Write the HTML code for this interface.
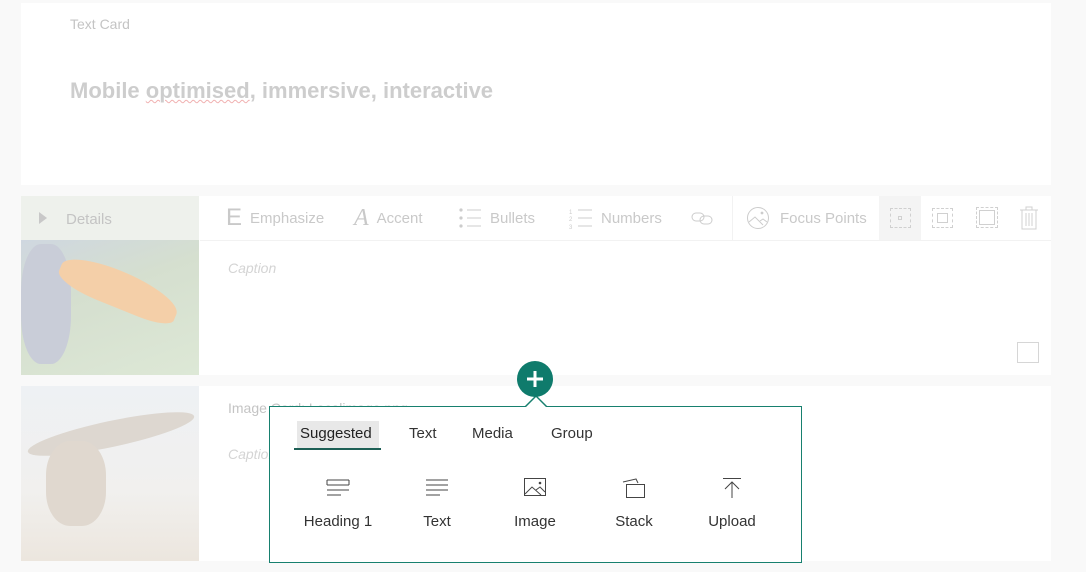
<!DOCTYPE html>
<html><head><meta charset="utf-8"><style>
*{margin:0;padding:0;box-sizing:border-box}
body{width:1086px;height:572px;background:#f9f9f9;font-family:"Liberation Sans",sans-serif;position:relative;overflow:hidden;color:#c8c8c8}
.card{position:absolute;left:21px;width:1030px;background:#fff}
.abs{position:absolute}
.tb{position:absolute;top:0;height:44px;font-size:15px;color:#c9c9c9;display:flex;align-items:center}
.pop{position:absolute;left:269px;top:406px;width:533px;height:157px;border:1.5px solid #17806f;background:#fff}
.tab{position:absolute;top:18px;font-size:15px;color:#333}
.it{position:absolute;top:70px;width:90px;text-align:center;font-size:15px;color:#333}
.it svg{display:block;margin:0 auto 14px}
</style></head><body>
<div class="card" style="top:3px;height:182px">
 <div class="abs" style="left:49px;top:13px;font-size:14px;color:#c4c4c4">Text Card</div>
 <div class="abs" style="left:49px;top:75px;font-size:22px;font-weight:bold;color:#cdcdcd">Mobile <span style="text-decoration:underline wavy #f0b0b0;text-decoration-thickness:1px">optimised</span>, immersive, interactive</div>
</div>
<div class="card" style="top:196px;height:179px">
 <div class="abs" style="left:0;top:0;width:178px;height:44px;background:#eef1ec"></div>
 <div class="abs" style="left:18px;top:16px;width:0;height:0;border-left:8px solid #c8c8c8;border-top:6px solid transparent;border-bottom:6px solid transparent"></div>
 <div class="abs" style="left:45px;top:15px;font-size:15px;color:#c4c4c4">Details</div>
 <div class="abs" style="left:0;top:44px;width:178px;height:135px;background:linear-gradient(160deg,#cfd7e0 0%,#d5dfcf 40%,#dde8d6 100%)"></div>
 <div class="abs" style="left:0;top:48px;width:50px;height:120px;border-radius:40%;background:#c9cdd8"></div>
 <div class="abs" style="left:40px;top:52px;width:125px;height:36px;border-radius:50% 60% 30% 40%;background:#f4cfa8;transform:rotate(22deg);transform-origin:left center"></div>
 <div class="abs" style="left:179px;top:44px;width:851px;height:1px;background:#f2f2f2"></div>
 <div class="tb" style="left:205px"><span style="font-size:24px;margin-right:8px">E</span>Emphasize</div>
 <div class="tb" style="left:333px"><span style="font-size:24px;font-style:italic;margin-right:8px;font-family:'Liberation Serif'">A</span>Accent</div>
 <div class="tb" style="left:437px"><svg width="24" height="22" style="margin-right:8px"><path d="M9 3h14M9 11h14M9 19h14" stroke="#ccc"/><circle cx="3" cy="3" r="1.6" fill="#ccc"/><circle cx="3" cy="11" r="1.6" fill="#ccc"/><circle cx="3" cy="19" r="1.6" fill="#ccc"/></svg>Bullets</div>
 <div class="tb" style="left:548px"><svg width="24" height="22" style="margin-right:8px"><path d="M9 3h14M9 11h14M9 19h14" stroke="#ccc"/><text x="0" y="7" font-size="6" fill="#ccc">1</text><text x="0" y="14" font-size="6" fill="#ccc">2</text><text x="0" y="22" font-size="6" fill="#ccc">3</text></svg>Numbers</div>
 <div class="tb" style="left:670px"><svg width="24" height="16"><rect x="1" y="3" width="12" height="8" rx="4" stroke="#ccc" fill="none"/><rect x="9" y="6" width="12" height="8" rx="4" stroke="#ccc" fill="none"/></svg></div>
 <div class="abs" style="left:711px;top:0;width:1px;height:44px;background:#f2f2f2"></div>
 <div class="tb" style="left:725px"><svg width="24" height="24" style="margin-right:10px"><circle cx="12" cy="12" r="10.5" stroke="#ccc" fill="none"/><path d="M3 16l6-5 8 8M14 15l3-2 4 3" stroke="#ccc" fill="none"/><circle cx="16" cy="7" r="1.4" fill="#ccc"/></svg>Focus Points</div>
 <div class="abs" style="left:858px;top:0;width:42px;height:44px;background:#f4f4f4"></div>
 <div class="abs" style="left:869px;top:12px;width:21px;height:20px;border:1px dashed #d0d0d0"></div>
 <div class="abs" style="left:877px;top:20px;width:4px;height:4px;border:1px solid #d0d0d0"></div>
 <div class="abs" style="left:911px;top:12px;width:21px;height:20px;border:1px dashed #d0d0d0"></div>
 <div class="abs" style="left:916px;top:17px;width:11px;height:10px;border:1px solid #d0d0d0"></div>
 <div class="abs" style="left:955px;top:11px;width:22px;height:21px;border:1px dashed #d0d0d0"></div>
 <div class="abs" style="left:958px;top:14px;width:16px;height:15px;border:1.5px solid #d0d0d0"></div>
 <svg class="abs" style="left:998px;top:10px" width="20" height="24"><path d="M1 4h18M7 4V1h6v3M3 4v19h14V4M7 7v13M10 7v13M13 7v13" stroke="#d0d0d0" fill="none"/></svg>
 <div class="abs" style="left:207px;top:64px;font-size:14px;font-style:italic;color:#d4d4d4">Caption</div>
 <div class="abs" style="left:996px;top:146px;width:22px;height:21px;border:1px solid #d6d6d6"></div>
</div>
<div class="card" style="top:386px;height:175px">
 <div class="abs" style="left:0;top:0;width:178px;height:175px;background:linear-gradient(180deg,#eef1f4 0%,#f1f0ee 60%,#ece6de 100%)"></div>
 <div class="abs" style="left:5px;top:35px;width:170px;height:26px;border-radius:50%;background:#ddd7d0;transform:rotate(-12deg)"></div>
 <div class="abs" style="left:25px;top:55px;width:60px;height:85px;border-radius:40%;background:#e0d8cf"></div>
 <div class="abs" style="left:207px;top:14px;font-size:14px;color:#c4c4c4">Image Card: Localimage.png</div>
 <div class="abs" style="left:207px;top:60px;font-size:14px;font-style:italic;color:#d4d4d4">Caption</div>
</div>
<div class="pop">
 <div class="abs" style="left:27px;top:14px;width:82px;height:27px;background:#e8e8e8"></div>
 <div class="tab" style="left:30px;color:#222">Suggested</div>
 <div class="abs" style="left:24px;top:41px;width:87px;height:2px;background:#1d5f55"></div>
 <div class="tab" style="left:139px">Text</div>
 <div class="tab" style="left:202px">Media</div>
 <div class="tab" style="left:281px">Group</div>
 <div class="it" style="left:23px"><svg width="24" height="22"><path d="M1 3h22M1 8h22M1 3v5M23 3v5M1 13h22M1 18h14" stroke="#444" fill="none"/></svg>Heading 1</div>
 <div class="it" style="left:122px"><svg width="24" height="22"><path d="M1 3h22M1 8h22M1 13h22M1 18h14" stroke="#444" fill="none"/></svg>Text</div>
 <div class="it" style="left:220px"><svg width="24" height="22"><rect x="1.5" y="1.5" width="21" height="17" stroke="#444" fill="none"/><path d="M2 17l7-7 9 8M13 13l4-3 5 5" stroke="#444" fill="none"/><circle cx="17" cy="6" r="1.3" fill="#444"/></svg>Image</div>
 <div class="it" style="left:319px"><svg width="24" height="22"><path d="M1 5l13-3 2 4" stroke="#444" fill="none"/><rect x="4.5" y="7.5" width="18" height="13" stroke="#444" fill="none"/></svg>Stack</div>
 <div class="it" style="left:417px"><svg width="24" height="22"><path d="M3 1.5h18M12 5v16M5 12l7-7 7 7" stroke="#444" fill="none"/></svg>Upload</div>
</div>
<svg class="abs" style="left:517px;top:361px" width="38" height="50"><path d="M8 46L19 35L30 46" fill="#fff" stroke="#17806f" stroke-width="1.5"/><rect x="6" y="46" width="26" height="4" fill="#fff"/><circle cx="18" cy="18" r="18" fill="#0f7b6c"/><path d="M18 10v16M10 18h16" stroke="#fff" stroke-width="3"/></svg>
</body></html>
